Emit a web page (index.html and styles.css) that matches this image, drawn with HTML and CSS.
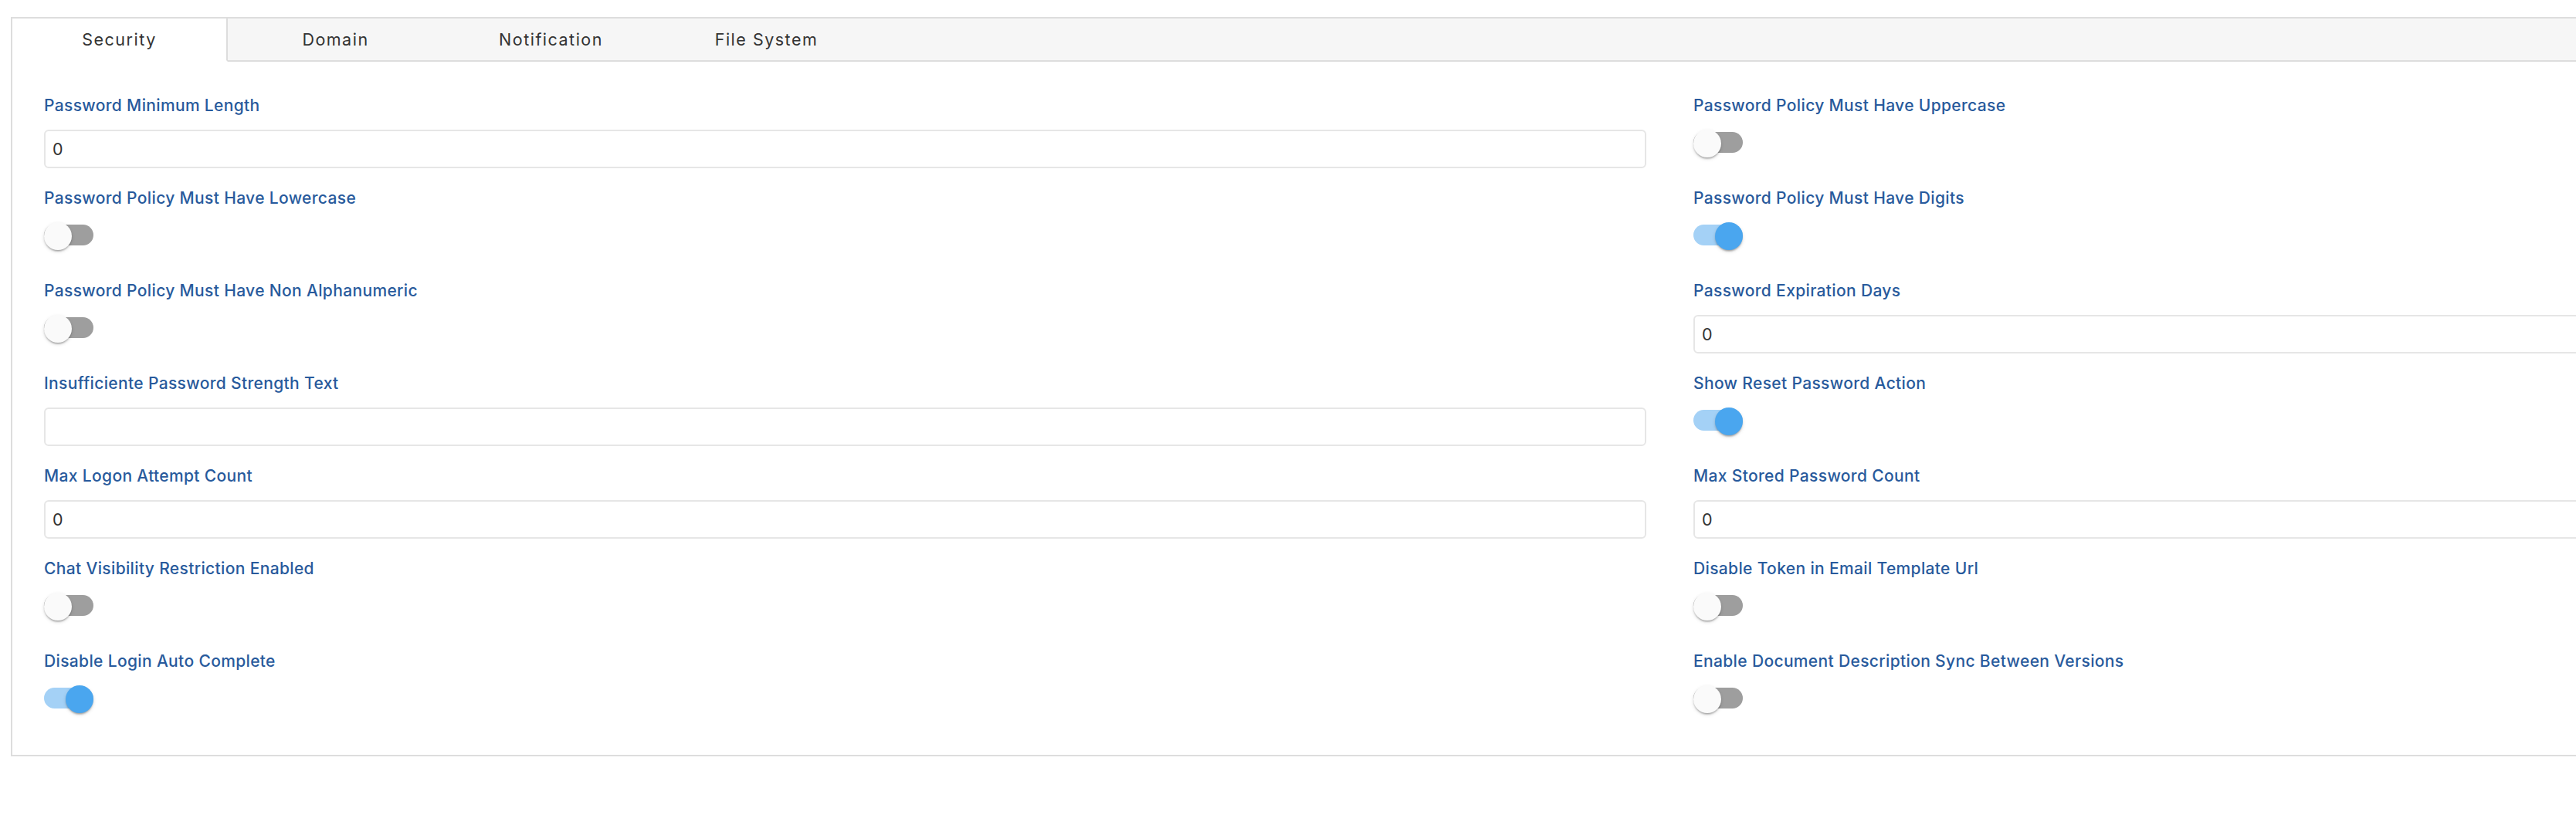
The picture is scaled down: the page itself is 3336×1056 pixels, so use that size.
FILE: index.html
```html
<!DOCTYPE html>
<html lang="en">
<head>
<meta charset="utf-8">
<title>Settings</title>
<link rel="stylesheet" href="styles.css">
</head>
<body>
<div class="panel">
  <div class="tabs">
    <div class="tab active">Security</div>
    <div class="tab">Domain</div>
    <div class="tab">Notification</div>
    <div class="tab">File System</div>
    <div class="tab-fill"></div>
  </div>
  <div class="content">
    <div class="field"><label class="label">Password Minimum Length</label><input class="input" type="text" value="0"></div>
    <div class="field"><label class="label">Password Policy Must Have Uppercase</label><div class="toggle"><div class="track"></div><div class="knob"></div></div></div>

    <div class="field"><label class="label">Password Policy Must Have Lowercase</label><div class="toggle"><div class="track"></div><div class="knob"></div></div></div>
    <div class="field"><label class="label">Password Policy Must Have Digits</label><div class="toggle on"><div class="track"></div><div class="knob"></div></div></div>

    <div class="field"><label class="label">Password Policy Must Have Non Alphanumeric</label><div class="toggle"><div class="track"></div><div class="knob"></div></div></div>
    <div class="field"><label class="label">Password Expiration Days</label><input class="input" type="text" value="0"></div>

    <div class="field"><label class="label">Insufficiente Password Strength Text</label><input class="input" type="text" value=""></div>
    <div class="field"><label class="label">Show Reset Password Action</label><div class="toggle on"><div class="track"></div><div class="knob"></div></div></div>

    <div class="field"><label class="label">Max Logon Attempt Count</label><input class="input" type="text" value="0"></div>
    <div class="field"><label class="label">Max Stored Password Count</label><input class="input" type="text" value="0"></div>

    <div class="field"><label class="label">Chat Visibility Restriction Enabled</label><div class="toggle"><div class="track"></div><div class="knob"></div></div></div>
    <div class="field"><label class="label">Disable Token in Email Template Url</label><div class="toggle"><div class="track"></div><div class="knob"></div></div></div>

    <div class="field"><label class="label">Disable Login Auto Complete</label><div class="toggle on"><div class="track"></div><div class="knob"></div></div></div>
    <div class="field"><label class="label">Enable Document Description Sync Between Versions</label><div class="toggle"><div class="track"></div><div class="knob"></div></div></div>
  </div>
</div>
</body>
</html>
```

FILE: styles.css
```css
html, body {
  margin: 0;
  padding: 0;
  overflow: hidden;
  background: #ffffff;
}

body {
  font-family: Inter, "Noto Sans", sans-serif;
  color: #333333;
}

.panel {
  box-sizing: border-box;
  width: 4297px;
  margin: 22px 0 0 14px;
  border: 2px solid #dddddd;
}

.tabs {
  display: flex;
  background: #f6f6f6;
  height: 56px;
}

.tab {
  box-sizing: border-box;
  flex: 0 0 279px;
  display: flex;
  align-items: center;
  justify-content: center;
  font-size: 21.5px;
  font-weight: 400;
  letter-spacing: 1.5px;
  color: #333333;
  border-bottom: 2px solid #dddddd;
}

.tab.active {
  background: #ffffff;
  border-right: 2px solid #dddddd;
  border-bottom-color: #ffffff;
}

.tab-fill {
  flex: 1;
  border-bottom: 2px solid #dddddd;
}

.content {
  display: grid;
  grid-template-columns: 2075px 2075px;
  grid-auto-rows: 120px;
  column-gap: 61px;
  padding: 44px 41px 14px 41px;
}

.field {
  display: flex;
  flex-direction: column;
  align-items: flex-start;
}

.label {
  font-size: 21px;
  font-weight: 500;
  line-height: 26px;
  letter-spacing: 0.35px;
  color: #285a9c;
  margin-bottom: 18px;
}

.input {
  box-sizing: border-box;
  width: 100%;
  height: 50px;
  border: 2px solid #e6e6e6;
  border-radius: 6px;
  padding: 0 9px;
  font-family: Inter, "Noto Sans", sans-serif;
  font-size: 21.5px;
  letter-spacing: 0.5px;
  color: #333333;
  background: #ffffff;
  outline: none;
}

.toggle {
  position: relative;
  width: 64px;
  height: 36px;
}

.track {
  margin-top: 3px;
  width: 64px;
  height: 27px;
  border-radius: 14px;
  background: #9e9e9e;
}

.knob {
  position: absolute;
  top: 0;
  left: 0;
  width: 36px;
  height: 36px;
  border-radius: 50%;
  background: #fafafa;
  box-shadow: 0 3px 2px -2px rgba(0,0,0,0.2), 0 2px 2px 0 rgba(0,0,0,0.14), 0 2px 5px 0 rgba(0,0,0,0.12);
}

.toggle.on .track {
  background: #a4d1f6;
}

.toggle.on .knob {
  left: 28px;
  background: #4aa6ef;
}
```
